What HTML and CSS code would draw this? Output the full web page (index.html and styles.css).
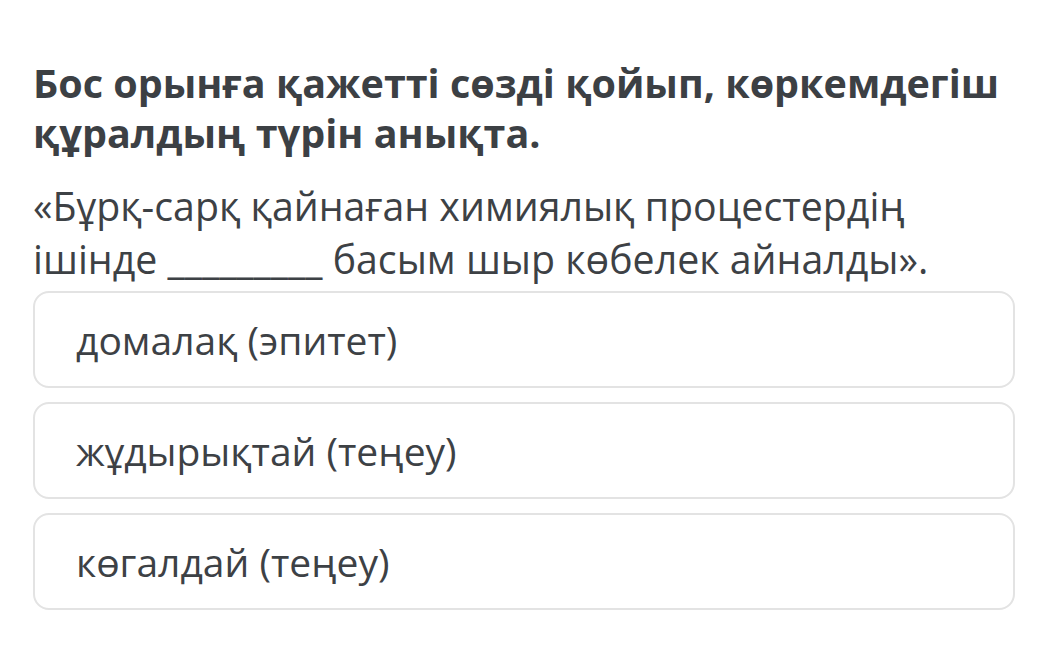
FILE: index.html
```html
<!DOCTYPE html>
<html lang="kk">
<head>
<meta charset="utf-8">
<link rel="stylesheet" href="styles.css">
</head>
<body>
<main class="quiz">
  <h1 class="title">Бос орынға қажетті сөзді қойып, көркемдегіш құралдың түрін анықта.</h1>
  <p class="question">«Бұрқ-сарқ қайнаған химиялық процестердің ішінде _________ басым шыр көбелек айналды».</p>
  <div class="options">
    <div class="option">домалақ (эпитет)</div>
    <div class="option">жұдырықтай (теңеу)</div>
    <div class="option">көгалдай (теңеу)</div>
  </div>
</main>
</body>
</html>
```

FILE: styles.css
```css
html, body {
  margin: 0;
  padding: 0;
  background: #ffffff;
}
body {
  font-family: "Open Sans", "Noto Sans", sans-serif;
  color: #3d4145;
}
.quiz {
  width: 982px;
  padding: 58px 0 0 33px;
}
.title {
  margin: 0;
  font-size: 39.5px;
  font-weight: 700;
  line-height: 50px;
  color: #3c4044;
  width: 975px;
}
.question {
  margin: 22px 0 0;
  font-size: 39.3px;
  font-weight: 400;
  line-height: 53px;
  color: #3d4145;
  width: 960px;
}
.options {
  display: flex;
  flex-direction: column;
  gap: 14px;
  margin-top: 5px;
}
.option {
  height: 93px;
  border: 2px solid #e3e3e3;
  border-radius: 16px;
  box-sizing: content-box;
  display: flex;
  align-items: center;
  padding-left: 41px;
  font-size: 39px;
  color: #3d4145;
}
```
